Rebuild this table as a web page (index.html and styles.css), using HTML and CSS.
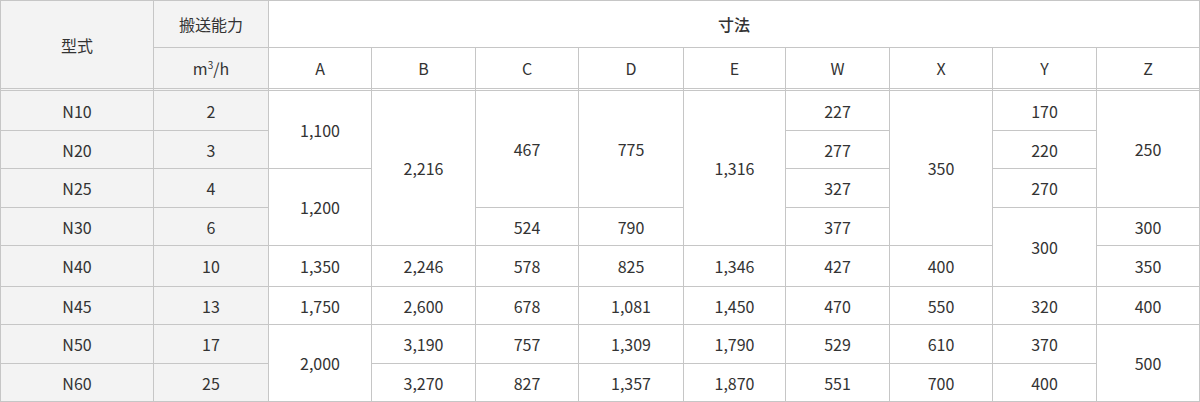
FILE: index.html
```html
<!DOCTYPE html>
<html lang="ja">
<head>
<meta charset="utf-8">
<title>寸法表</title>
<link rel="stylesheet" href="styles.css">
</head>
<body>
<table class="spec">
  <colgroup>
    <col class="c-model">
    <col class="c-cap">
    <col class="c-a">
    <col class="c-b">
    <col class="c-c">
    <col class="c-d">
    <col class="c-e">
    <col class="c-w">
    <col class="c-x">
    <col class="c-y">
    <col class="c-z">
  </colgroup>
  <thead>
    <tr class="h1">
      <th rowspan="2" class="gray dbl">型式</th>
      <th class="gray">搬送能力</th>
      <th colspan="9" class="dim">寸法</th>
    </tr>
    <tr class="h2">
      <th class="gray dbl">m<sup>3</sup>/h</th>
      <th class="dbl">A</th><th class="dbl">B</th><th class="dbl">C</th><th class="dbl">D</th><th class="dbl">E</th><th class="dbl">W</th><th class="dbl">X</th><th class="dbl">Y</th><th class="dbl">Z</th>
    </tr>
  </thead>
  <tbody>
    <tr class="r1">
      <td class="gray">N10</td><td class="gray">2</td>
      <td rowspan="2">1,100</td>
      <td rowspan="4">2,216</td>
      <td rowspan="3">467</td>
      <td rowspan="3">775</td>
      <td rowspan="4">1,316</td>
      <td>227</td>
      <td rowspan="4">350</td>
      <td>170</td>
      <td rowspan="3">250</td>
    </tr>
    <tr class="r2">
      <td class="gray">N20</td><td class="gray">3</td>
      <td>277</td>
      <td>220</td>
    </tr>
    <tr class="r3">
      <td class="gray">N25</td><td class="gray">4</td>
      <td rowspan="2">1,200</td>
      <td>327</td>
      <td>270</td>
    </tr>
    <tr class="r4">
      <td class="gray">N30</td><td class="gray">6</td>
      <td>524</td><td>790</td>
      <td>377</td>
      <td rowspan="2">300</td>
      <td>300</td>
    </tr>
    <tr class="r5">
      <td class="gray">N40</td><td class="gray">10</td>
      <td>1,350</td><td>2,246</td><td>578</td><td>825</td><td>1,346</td><td>427</td><td>400</td><td>350</td>
    </tr>
    <tr class="r6">
      <td class="gray">N45</td><td class="gray">13</td>
      <td>1,750</td><td>2,600</td><td>678</td><td>1,081</td><td>1,450</td><td>470</td><td>550</td><td>320</td><td>400</td>
    </tr>
    <tr class="r7">
      <td class="gray">N50</td><td class="gray">17</td>
      <td rowspan="2">2,000</td>
      <td>3,190</td><td>757</td><td>1,309</td><td>1,790</td><td>529</td><td>610</td><td>370</td>
      <td rowspan="2">500</td>
    </tr>
    <tr class="r8">
      <td class="gray">N60</td><td class="gray">25</td>
      <td>3,270</td><td>827</td><td>1,357</td><td>1,870</td><td>551</td><td>700</td><td>400</td>
    </tr>
  </tbody>
</table>
</body>
</html>
```

FILE: styles.css
```css
html, body {
  margin: 0;
  padding: 0;
  background: #ffffff;
}

body {
  font-family: "Noto Sans CJK JP", "Noto Sans", sans-serif;
  font-size: 16px;
  color: #333333;
}

.spec {
  width: 1200px;
  table-layout: fixed;
  border-collapse: separate;
  border-spacing: 0;
  border-top: 1px solid #c6c6c6;
  border-left: 1px solid #c6c6c6;
}

.c-model { width: 153px; }
.c-cap { width: 115px; }
.c-a { width: 103px; }
.c-b { width: 104px; }
.c-c { width: 103px; }
.c-d { width: 105px; }
.c-e { width: 102px; }
.c-w { width: 104px; }
.c-x { width: 103px; }
.c-y { width: 104px; }
.c-z { width: 103px; }

.spec th,
.spec td {
  box-sizing: border-box;
  border-right: 1px solid #c6c6c6;
  border-bottom: 1px solid #c6c6c6;
  padding: 0;
  text-align: center;
  vertical-align: middle;
  font-weight: normal;
  line-height: 20px;
  background: #ffffff;
}

.spec .gray {
  background: #f3f3f3;
}

.spec .dim {
  font-weight: 500;
}

.spec .dbl {
  border-bottom: 3px double #c6c6c6;
}

.spec sup {
  font-size: 10px;
  line-height: 0;
  vertical-align: 6px;
}

.h1 { height: 47px; }
.h2 { height: 43px; }
.r1 { height: 40px; }
.r2 { height: 38px; }
.r3 { height: 39px; }
.r4 { height: 38px; }
.r5 { height: 41px; }
.r6 { height: 38px; }
.r7 { height: 39px; }
.r8 { height: 38px; }
```
